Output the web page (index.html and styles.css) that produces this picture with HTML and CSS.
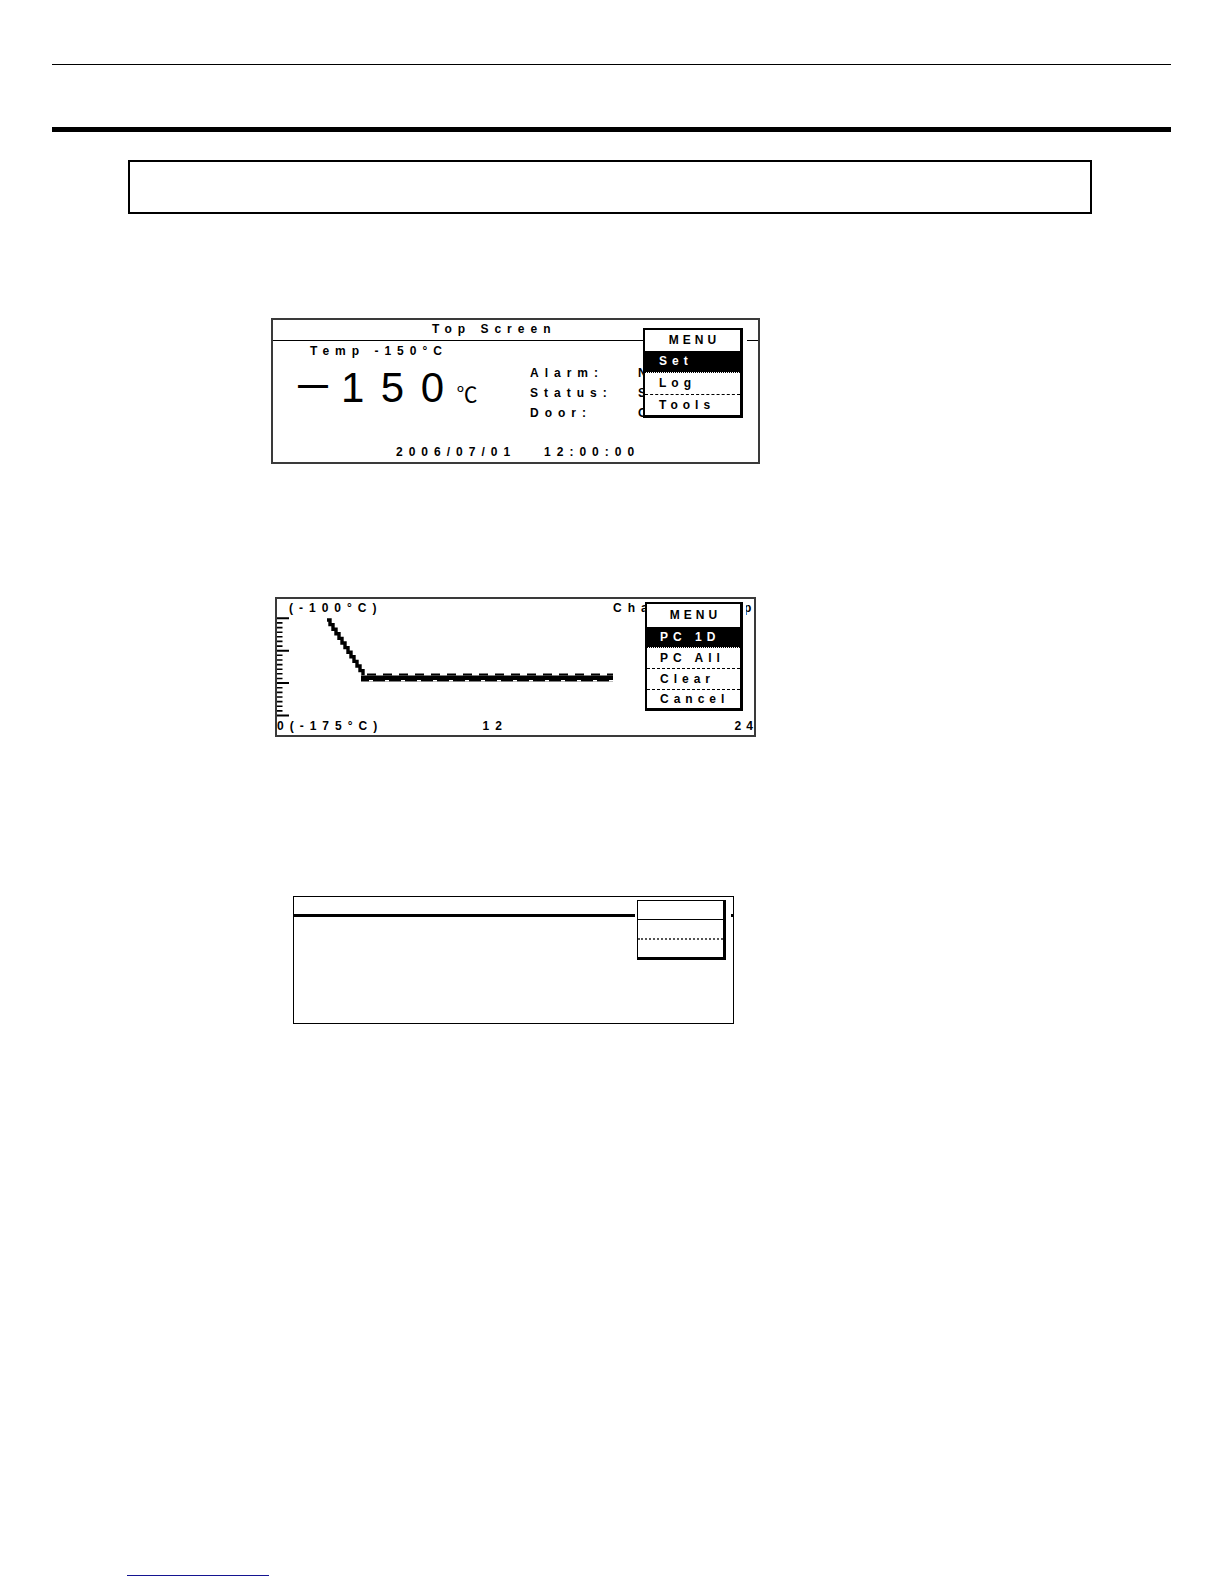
FILE: index.html
```html
<!DOCTYPE html>
<html lang="en">
<head>
<meta charset="utf-8">
<title>Controller screens</title>
<link rel="stylesheet" href="styles.css">
</head>
<body>
<div class="page">
  <div class="rule rule-thin"></div>
  <div class="rule rule-thick"></div>
  <div class="note"></div>

  <div class="lcd lcd-top">
    <div class="lcd-title">Top Screen</div>
    <div class="top-body">
      <div class="reading">
        <div class="setpoint">Temp -150°C</div>
        <div class="big"><span class="big-dash">—</span><span class="big-digits">150</span><span class="big-unit">℃</span></div>
      </div>
      <div class="status">
        <span>Alarm:</span><span>Normal</span>
        <span>Status:</span><span>Stop</span>
        <span>Door:</span><span>Close</span>
      </div>
    </div>
    <div class="clock">2006/07/01   12:00:00</div>
    <div class="menu menu-top">
      <div class="menu-head">MENU</div>
      <div class="menu-item sel dotted">Set</div>
      <div class="menu-item dashed">Log</div>
      <div class="menu-item last">Tools</div>
    </div>
  </div>

  <div class="lcd lcd-chart">
    <div class="chart-top">
      <span>(-100°C)</span><span class="chart-title">Chart   Temp</span>
    </div>
    <svg class="plot" viewBox="0 0 477 104" width="477" height="104">
      <path class="tick-major" d="M0 3.3h12M0 35.7h12M0 68.1h12M0 100.5h12"/>
      <path class="tick-minor" d="M0 7.9h5.5M0 12.6h5.5M0 17.2h5.5M0 21.8h5.5M0 26.4h5.5M0 31.1h5.5M0 40.3h5.5M0 45h5.5M0 49.6h5.5M0 54.2h5.5M0 58.8h5.5M0 63.5h5.5M0 72.7h5.5M0 77.4h5.5M0 82h5.5M0 86.6h5.5M0 91.2h5.5M0 95.9h5.5"/>
      <path class="trace" d="M50 5h3v4.6h3v4.6h3v4.6h3v4.6h3v4.6h3v4.6h3v4.6h3v4.6h3v4.6h3v4.6h3v4.6h3v4.6"/>
      <rect class="band" x="84" y="60.5" width="252" height="6"/>
      <path class="band-top" d="M90 59.6H336"/>
      <path class="band-notch" d="M86 65.8H336"/>
    </svg>
    <div class="chart-axis">
      <span>0(-175°C)</span><span>12</span><span class="axis-end">24</span>
    </div>
    <div class="menu menu-chart">
      <div class="menu-head">MENU</div>
      <div class="menu-item sel dotted">PC 1D</div>
      <div class="menu-item dashed">PC All</div>
      <div class="menu-item dashed">Clear</div>
      <div class="menu-item last">Cancel</div>
    </div>
  </div>

  <div class="lcd lcd-blank">
    <div class="blank-head"></div>
    <div class="menu menu-blank">
      <div class="mb-head"></div>
      <div class="mb-row"></div>
      <div class="mb-row last"></div>
    </div>
  </div>

  <div class="footer-rule"></div>
</div>
</body>
</html>
```
FILE: styles.css
```css
* { box-sizing: border-box; }

body {
  margin: 0;
  background: #fff;
}

.page {
  width: 1224px;
  padding-top: 64px;
}

.rule {
  margin-left: 52px;
  width: 1119px;
  background: #000;
}
.rule-thin { height: 1px; }
.rule-thick { height: 5px; margin-top: 62px; }

.note {
  margin: 28px 0 0 128px;
  width: 964px;
  height: 54px;
  border: 2px solid #000;
}

/* LCD panels */
.lcd {
  position: relative;
  overflow: hidden;
  background: #fff;
  color: #000;
  font: bold 12px/14px "Liberation Sans", Arial, sans-serif;
  letter-spacing: 6px;
}

.lcd-top {
  margin: 104px 0 0 271px;
  width: 489px;
  height: 146px;
  border: 2px solid #3a3a3a;
}

.lcd-title {
  height: 21px;
  padding: 2px 0 0 159px;
  border-bottom: 1px solid #000;
}

.top-body {
  display: flex;
  height: 104px;
  padding-left: 25px;
}

.reading { width: 232px; flex: none; }

.setpoint {
  margin-top: 3px;
  padding-left: 12px;
}

.big {
  margin-top: 8px;
  height: 44px;
  font-weight: 400;
  font-size: 42px;
  line-height: 44px;
  letter-spacing: 0;
  white-space: nowrap;
}
.big-dash {
  font-weight: 700;
  font-size: 30px;
  line-height: 0;
  vertical-align: 7px;
  margin: 0 13px 0 0;
}
.big-digits { letter-spacing: 16.5px; }
.big-unit {
  font: 400 21px/0 "Noto Sans CJK JP", "DejaVu Sans", sans-serif;
  letter-spacing: 0;
  margin-left: -4px;
}

.status {
  display: grid;
  grid-template-columns: 108px auto;
  align-content: start;
  padding-top: 22px;
  line-height: 20px;
  white-space: nowrap;
}

.clock {
  padding-left: 123px;
  white-space: pre;
}

/* pop-up menus */
.menu {
  position: absolute;
  background: #fff;
  border: solid #000;
  border-width: 2px 3px 3px 2px;
  letter-spacing: 5px;
  white-space: nowrap;
}
.menu-head {
  text-align: center;
  letter-spacing: 4px;
  padding-left: 4px;
}
.menu-item { padding-left: 14px; }
.menu-item.sel {
  background: #000;
  background-clip: padding-box;
  color: #fff;
}
.dotted { border-bottom: 1px dotted #000; }
.dashed { border-bottom: 1px dashed #000; }

.menu-top {
  left: 370px;
  top: 8px;
  width: 100px;
  box-shadow: 4px 0 0 #fff;
}
.menu-top .menu-head { line-height: 21px; }
.menu-top .menu-item { line-height: 21px; }
.menu-top .menu-item.last { line-height: 20px; }

/* chart panel */
.lcd-chart {
  margin: 133px 0 0 275px;
  width: 481px;
  height: 140px;
  border: 2px solid #3a3a3a;
}

.chart-top {
  display: grid;
  grid-template-columns: 324px auto;
  height: 16px;
  padding: 2px 0 0 12px;
  white-space: nowrap;
}
.chart-title { white-space: pre; }

.plot {
  display: block;
  width: 477px;
  height: 104px;
}
.tick-major { stroke: #000; stroke-width: 2; fill: none; }
.tick-minor { stroke: #000; stroke-width: 1.6; fill: none; }
.trace {
  fill: none;
  stroke: #000;
  stroke-width: 3.4;
  stroke-linejoin: miter;
}
.band { fill: #000; }
.band-top {
  stroke: #000;
  stroke-width: 2;
  stroke-dasharray: 9 7;
}
.band-notch {
  stroke: #fff;
  stroke-width: 1.5;
  stroke-dasharray: 4 12;
  stroke-dashoffset: -6;
}

.chart-axis {
  display: grid;
  grid-template-columns: 205.5px 252px 1fr;
  white-space: nowrap;
}
.axis-end {
  text-align: right;
  letter-spacing: 5px;
  padding-right: 1px;
}

.menu-chart {
  left: 368px;
  top: 3px;
  width: 98px;
  box-shadow: 3px 0 0 #fff;
}
.menu-chart .menu-head { line-height: 23px; }
.menu-chart .menu-item { padding-left: 13px; line-height: 20px; }
.menu-chart .menu-item.last { line-height: 18px; }

/* blank panel */
.lcd-blank {
  margin: 159px 0 0 293px;
  width: 441px;
  height: 128px;
  border: 1px solid #000;
}
.blank-head {
  height: 19.5px;
  border-bottom: 3px solid #000;
}
.menu-blank {
  left: 343px;
  top: 3px;
  width: 89px;
  height: 60px;
  border-width: 1px 3px 3px 1px;
  box-shadow: 0 0 0 2px #fff, 3px 0 0 2px #fff;
}
.mb-head {
  height: 19px;
  border-bottom: 1px solid #000;
}
.mb-row {
  height: 20px;
  border-bottom: 2px dotted #555;
}
.mb-row.last { border-bottom: 0; height: 16px; }

.footer-rule {
  margin: 551px 0 0 127px;
  width: 142px;
  height: 1px;
  background: #141491;
}
```
